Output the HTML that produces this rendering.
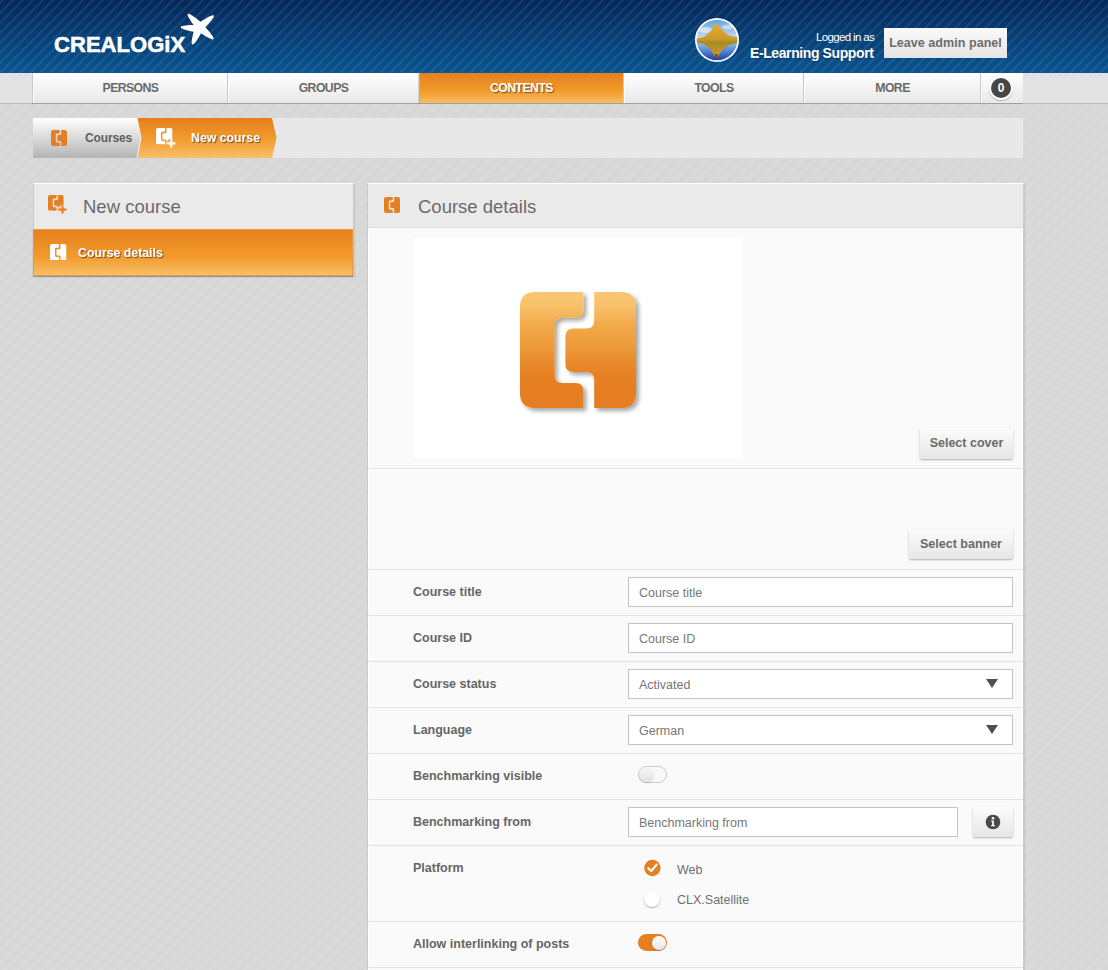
<!DOCTYPE html>
<html><head><meta charset="utf-8">
<style>
*{box-sizing:border-box;margin:0;padding:0}
html,body{width:1108px;height:970px;overflow:hidden}
body{font-family:"Liberation Sans",sans-serif;position:relative;
 background-color:#d7d7d7;
 background-image:repeating-linear-gradient(-45deg,rgba(255,255,255,0) 0px,rgba(255,255,255,0) 4.5px,rgba(255,255,255,.075) 5px,rgba(255,255,255,.075) 8px,rgba(255,255,255,0) 8.5px);
}
.a{position:absolute}
#hdr{left:0;top:0;width:1108px;height:73px;
 background-image:repeating-linear-gradient(-45deg,rgba(255,255,255,0) 0px,rgba(255,255,255,0) 4.3px,rgba(255,255,255,.075) 4.8px,rgba(255,255,255,.075) 6.6px,rgba(255,255,255,0) 7.07px),linear-gradient(#04285a,#095591);}
#logo{left:54px;top:34px;color:#fff;font-weight:bold;font-size:22px;letter-spacing:0.05px;line-height:22px;-webkit-text-stroke:0.55px #fff}
#nav{left:0;top:73px;width:1108px;height:30px;background:#e3e3e3;box-shadow:0 1px 0 #b9b9b9}
.ni{position:absolute;top:73px;height:30px;background:linear-gradient(#ffffff,#e8e8e8);color:#6a6a6a;font-weight:bold;font-size:12.3px;letter-spacing:-0.6px;text-align:center;line-height:30px;border-left:1px solid #c9c9c9;box-shadow:inset 1px 0 #fff,0 1px 0 #a0a0a0}
.ni.on{background:linear-gradient(#e6801e,#f29a2a 60%,#f8be66);color:#fff;text-shadow:1px 1px 1px rgba(0,0,0,.5);border-left:1px solid #d2d4d6;box-shadow:inset 1px 0 #f8a423,0 1px 0 #a0a0a0}
.pnl{position:absolute;background:#fafafa;border:1px solid #cacaca;border-top:1px solid #fff;box-shadow:1px 1px 1px rgba(0,0,0,.08)}
.ph{position:absolute;left:0;top:0;right:0;height:44px;background:#eaeaea;border-bottom:1px solid #dcdcdc}
.pt{position:absolute;color:#6b6b6b;font-size:18.5px;line-height:22px;white-space:nowrap}
.hr{position:absolute;left:368px;width:655px;height:1px;background:#e2e2e2}
.lbl{position:absolute;left:413px;color:#666;font-weight:bold;font-size:12.5px;line-height:14px;white-space:nowrap}
.inp{position:absolute;left:628px;width:385px;height:30px;background:#fff;border:1px solid #c3c3c3;color:#777;font-size:12.5px;line-height:30px;padding-left:10px;white-space:nowrap}
.btn{position:absolute;background:linear-gradient(#fcfcfc,#e6e6e6);color:#6a6a6a;font-weight:bold;font-size:12.5px;text-align:center;box-shadow:0 1px 2px rgba(0,0,0,.3);border-radius:2px;white-space:nowrap}
.tri{position:absolute;width:0;height:0;border-left:6px solid transparent;border-right:6px solid transparent;border-top:9px solid #4f4f4f}
</style></head><body>
<svg width="0" height="0" style="position:absolute">
<defs>
<symbol id="ci" viewBox="0 0 116 116">
<path d="M15 0 H63.4 V17.7 Q63.4 25.7 55.4 25.7 H42.6 Q34.6 25.7 34.6 33.7 V83 Q34.6 91 42.6 91 H55.4 Q63.4 91 63.4 99 V116 H15 Q0 116 0 101 V15 Q0 0 15 0 Z"/>
<path d="M74.2 0 H101 Q116 0 116 15 V101 Q116 116 101 116 H74.2 V88 Q74.2 80 66.2 80 H53.4 Q45.4 80 45.4 72 V44.4 Q45.4 36.4 53.4 36.4 H66.2 Q74.2 36.4 74.2 28.4 Z"/>
</symbol>
<mask id="plusmask" maskUnits="userSpaceOnUse" x="0" y="0" width="116" height="116">
<rect x="-10" y="-10" width="140" height="140" fill="#fff"/>
<path d="M107 78 V138 M77 108 H137" stroke="#000" stroke-width="40"/>
</mask>
<symbol id="cip" viewBox="0 0 140 140">
<g mask="url(#plusmask)"><use href="#ci" x="0" y="0" width="116" height="116"/></g>
<path d="M107 79 V137 M78 108 H136" stroke-width="16"/>
</symbol>
<linearGradient id="big" x1="0" y1="0" x2="0" y2="1"><stop offset="0" stop-color="#f9c774"/><stop offset=".12" stop-color="#f8c06a"/><stop offset=".28" stop-color="#f2aa4a"/><stop offset=".45" stop-color="#ee9c3c"/><stop offset=".6" stop-color="#e98b2d"/><stop offset=".72" stop-color="#e68023"/><stop offset="1" stop-color="#e57d20"/></linearGradient>
<filter id="dsh" x="-20%" y="-20%" width="140%" height="140%"><feGaussianBlur in="SourceAlpha" stdDeviation="2.2"/><feOffset dx="3" dy="3"/><feComponentTransfer><feFuncA type="linear" slope=".35"/></feComponentTransfer><feMerge><feMergeNode/><feMergeNode in="SourceGraphic"/></feMerge></filter>
</defs></svg>
<div id="hdr" class="a"></div>
<div id="logo" class="a">CREALOGiX</div>
<svg class="a" style="left:0;top:0" width="230" height="60">
<path id="star" d="M193.62 24.89 C183.45 11.34 186.50 10.01 200.55 21.86 C216.32 11.39 218.42 13.78 205.32 27.27 C217.97 40.80 216.06 43.47 200.98 33.34 C192.57 48.94 189.33 48.27 193.62 31.82 C176.30 28.15 176.30 25.10 193.62 24.89 Z" fill="#fff"/>
</svg>
<!-- avatar -->
<svg class="a" style="left:695px;top:18px" width="44" height="44">
<defs><clipPath id="av"><circle cx="22" cy="22" r="20.3"/></clipPath>
<linearGradient id="sky" x1="0" y1="0" x2="0" y2="1"><stop offset="0" stop-color="#5f9ee0"/><stop offset=".45" stop-color="#c4d8ea"/><stop offset=".52" stop-color="#a8c6e0"/><stop offset=".75" stop-color="#4f86d6"/><stop offset="1" stop-color="#1c2f9a"/></linearGradient>
<linearGradient id="mtn" x1="0" y1="0" x2="0" y2="1"><stop offset="0" stop-color="#f0a830"/><stop offset=".45" stop-color="#c99a2a"/><stop offset=".55" stop-color="#a58a26"/><stop offset="1" stop-color="#e0982a"/></linearGradient></defs>
<circle cx="22" cy="22" r="22" fill="#fff"/>
<g clip-path="url(#av)">
<rect x="0" y="0" width="44" height="44" fill="url(#sky)"/>
<ellipse cx="10" cy="12" rx="7" ry="3" fill="#e8eef4" opacity=".7"/>
<ellipse cx="33" cy="9" rx="6" ry="2.5" fill="#eef2f6" opacity=".6"/>
<path d="M0 21 L9 19 L15 14 L21.5 5.5 L28 13 L34 17.5 L44 20 L44 24.5 L34 27 L28 31 L21.5 40.5 L15 31 L9 26 L0 24 Z" fill="url(#mtn)"/>
<path d="M20 36 L23 36 L22 41 L20.5 41 Z" fill="#7a4a18"/>
</g>
</svg>
<div class="a" style="left:816px;top:31px;color:#fff;font-size:11.5px;line-height:13px;white-space:nowrap;letter-spacing:-0.65px">Logged in as</div>
<div class="a" style="left:750px;top:45px;color:#fff;font-size:14px;font-weight:bold;line-height:16px;white-space:nowrap;letter-spacing:-0.4px;text-shadow:0 1px 1px rgba(0,0,0,.3)">E-Learning Support</div>
<div class="btn" style="left:884px;top:28px;width:123px;height:30px;line-height:30px;font-size:12.6px;color:#6d6d6d;border-radius:0;box-shadow:none;background:linear-gradient(#fafafa,#e4e4e4)">Leave admin panel</div>

<!-- nav -->
<div id="nav" class="a"></div>
<div class="ni" style="left:32px;width:196px">PERSONS</div>
<div class="ni" style="left:227px;width:192px">GROUPS</div>
<div class="ni on" style="left:418px;width:206px">CONTENTS</div>
<div class="ni" style="left:623px;width:181px">TOOLS</div>
<div class="ni" style="left:803px;width:178px">MORE</div>
<div class="ni" style="left:980px;width:43px"></div>
<div class="a" style="left:989px;top:76px;width:24px;height:24px;border-radius:50%;background:#fff;box-shadow:0 1px 1px rgba(0,0,0,.25)"></div>
<div class="a" style="left:991px;top:78px;width:20px;height:20px;border-radius:50%;background:#464646;color:#fff;font-weight:bold;font-size:12px;line-height:20px;text-align:center">0</div>

<!-- breadcrumb -->
<div class="a" style="left:33px;top:118px;width:990px;height:40px;background:#e8e8e8"></div>
<svg class="a" style="left:33px;top:118px" width="250" height="40">
<defs>
<linearGradient id="bg1" x1="0" y1="0" x2="0" y2="1"><stop offset="0" stop-color="#ffffff"/><stop offset="1" stop-color="#b4b4b4"/></linearGradient>
<linearGradient id="bo1" x1="0" y1="0" x2="0" y2="1"><stop offset="0" stop-color="#e67e1d"/><stop offset=".5" stop-color="#f09a2c"/><stop offset="1" stop-color="#f8c06a"/></linearGradient>
</defs>
<path d="M0 0 H104 L108 20 L104 40 H0 Z" fill="url(#bg1)"/>
<path d="M104 0 H239 L243.5 20 L239 40 H104 L108 20 Z" fill="url(#bo1)"/>
<path d="M104 0 L108 20 L104 40" fill="none" stroke="#f3f0f0" stroke-width="1"/>
</svg>
<div class="a" style="left:85px;top:131px;color:#5f5f5f;font-weight:bold;font-size:12px;line-height:14px;letter-spacing:-0.15px">Courses</div>
<div class="a" style="left:191px;top:131px;color:#fff;font-weight:bold;font-size:12.3px;line-height:14px;text-shadow:1px 1px 1px rgba(0,0,0,.55);white-space:nowrap">New course</div>

<!-- left panel -->
<div class="pnl" style="left:33px;top:183px;width:321px;height:93px;background:#eaeaea;border-bottom:none"></div>
<div class="pt" style="left:83px;top:196px">New course</div>
<div class="a" style="left:33px;top:229px;width:320px;height:47px;background:linear-gradient(#e6801e,#f29a2a 58%,#f8bf68);border:1px solid #eb9a3a;box-shadow:0 1px 1px rgba(0,0,0,.25)"></div>
<div class="a" style="left:78px;top:246px;color:#fff;font-weight:bold;font-size:12.3px;line-height:14px;text-shadow:1px 1px 1px rgba(0,0,0,.55);white-space:nowrap">Course details</div>

<!-- right panel -->
<div class="pnl" style="left:367px;top:183px;width:657px;height:800px;box-shadow:inset 1px 0 #fff,inset -1px 0 #fff,1px 1px 1px rgba(0,0,0,.08)"></div>
<div class="a" style="left:368px;top:184px;width:655px;height:44px;background:#eaeaea;border-bottom:1px solid #dcdcdc"></div>
<div class="pt" style="left:418px;top:196px">Course details</div>
<div class="a" style="left:413px;top:238px;width:330px;height:220px;background:#fff"></div>
<div class="btn" style="left:920px;top:428px;width:93px;height:31px;line-height:30px">Select cover</div>
<div class="hr" style="top:468px"></div>
<div class="btn" style="left:909px;top:529px;width:104px;height:30px;line-height:30px">Select banner</div>
<div class="hr" style="top:569px"></div>
<div class="lbl" style="top:585px">Course title</div>
<div class="inp" style="top:577px">Course title</div>
<div class="hr" style="top:615px"></div>
<div class="lbl" style="top:631px">Course ID</div>
<div class="inp" style="top:623px">Course ID</div>
<div class="hr" style="top:661px"></div>
<div class="lbl" style="top:677px">Course status</div>
<div class="inp" style="top:669px">Activated</div>
<div class="tri" style="left:986px;top:679px"></div>
<div class="hr" style="top:707px"></div>
<div class="lbl" style="top:723px">Language</div>
<div class="inp" style="top:715px">German</div>
<div class="tri" style="left:986px;top:725px"></div>
<div class="hr" style="top:753px"></div>
<div class="lbl" style="top:769px">Benchmarking visible</div>
<div class="a" style="left:638px;top:766px;width:29px;height:17px;border-radius:9px;border:1.5px solid #c9c9c9;background:#f9f9f9"></div>
<div class="a" style="left:639px;top:767px;width:15px;height:15px;border-radius:50%;background:linear-gradient(#f7f7f7,#e2e2e2);box-shadow:0 1px 1px rgba(0,0,0,.15)"></div>
<div class="hr" style="top:799px"></div>
<div class="lbl" style="top:815px">Benchmarking from</div>
<div class="inp" style="top:807px;width:330px">Benchmarking from</div>
<div class="btn" style="left:973px;top:807px;width:40px;height:30px"></div>
<svg class="a" style="left:984px;top:813px" width="18" height="18"><circle cx="9" cy="9" r="7.3" fill="#4a4a4a"/><circle cx="9" cy="5.2" r="1.3" fill="#fff"/><path d="M7.2 7.6 H9.9 V12 H10.9 V13.2 H7.2 V12 H8.2 V8.8 H7.2 Z" fill="#fff"/></svg>
<div class="hr" style="top:845px"></div>
<div class="lbl" style="top:861px">Platform</div>
<svg class="a" style="left:642px;top:858px" width="22" height="22"><circle cx="10.4" cy="10" r="8.2" fill="#e57f22"/><path d="M6.3 10.2 L9.2 13 L14.6 6.6" fill="none" stroke="#fff" stroke-width="2.2" stroke-linecap="round" stroke-linejoin="round"/></svg>
<div class="a" style="left:677px;top:863px;color:#6f6f6f;font-size:12.5px;line-height:14px">Web</div>
<div class="a" style="left:644px;top:891px;width:16px;height:16px;border-radius:50%;background:#fff;box-shadow:0 1px 1.5px rgba(0,0,0,.3)"></div>
<div class="a" style="left:677px;top:893px;color:#6f6f6f;font-size:12.5px;line-height:14px">CLX.Satellite</div>
<div class="hr" style="top:921px"></div>
<div class="lbl" style="top:937px">Allow interlinking of posts</div>
<div class="a" style="left:638px;top:934px;width:29px;height:17px;border-radius:9px;background:#e67e22"></div>
<div class="a" style="left:652px;top:936px;width:13.5px;height:13.5px;border-radius:50%;background:linear-gradient(#ffffff,#e6e6e6);box-shadow:0 1px 1px rgba(0,0,0,.2)"></div>
<div class="hr" style="top:967px"></div>

<svg class="a" style="left:51px;top:130px" width="16" height="16" fill="#e57f22"><use href="#ci" width="16" height="16"/></svg>
<svg class="a" style="left:156px;top:128px" width="20" height="20" fill="#fff" stroke="#fff"><use href="#cip" width="20" height="20"/></svg>
<svg class="a" style="left:48px;top:195px" width="19" height="19" fill="#e57f22" stroke="#e57f22"><use href="#cip" width="19" height="19"/></svg>
<svg class="a" style="left:50px;top:243.5px" width="16.5" height="16.5" fill="#fff"><use href="#ci" width="16.5" height="16.5"/></svg>
<svg class="a" style="left:384px;top:197px" width="16" height="16" fill="#e57f22"><use href="#ci" width="16" height="16"/></svg>
<svg class="a" style="left:510px;top:282px" width="140" height="140"><g filter="url(#dsh)" fill="url(#big)"><use href="#ci" x="10" y="10" width="116" height="116"/></g></svg>
</body></html>
